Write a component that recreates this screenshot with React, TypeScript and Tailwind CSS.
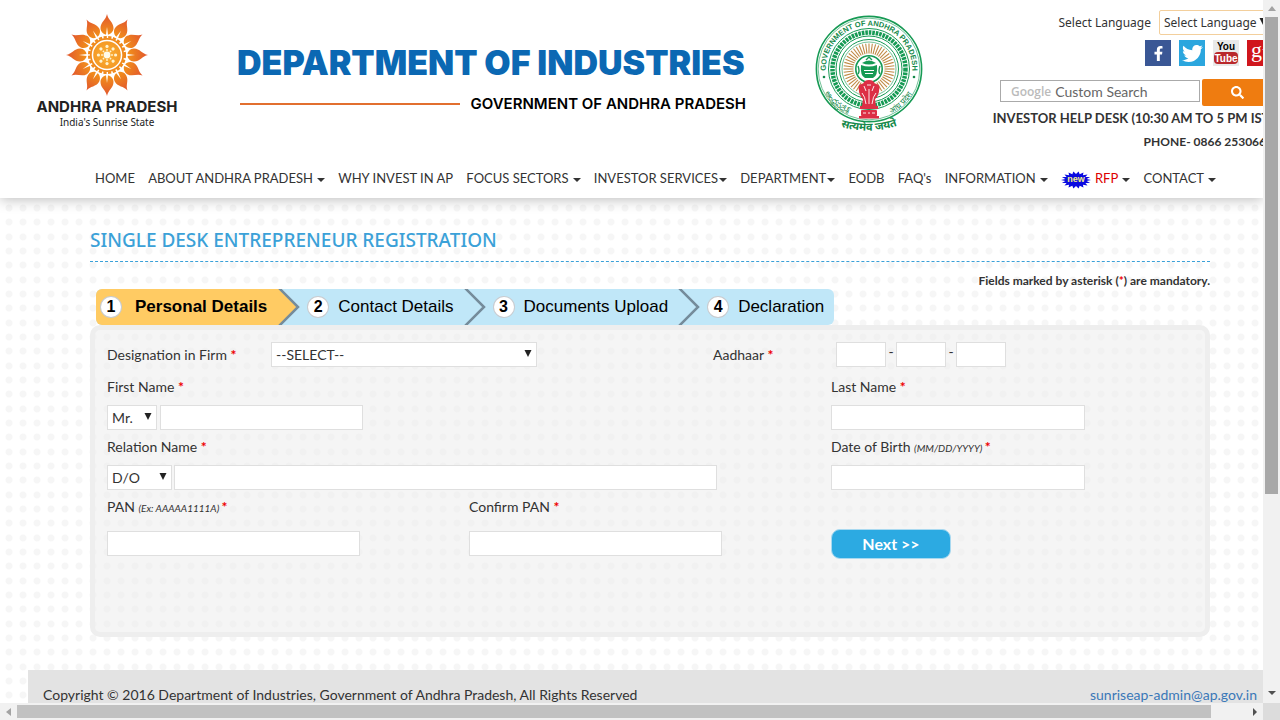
import React from "react";
import { FaFacebookF, FaSearch, FaTwitter } from "react-icons/fa";

const fieldClass = "h-[25px] border border-[#dfdfdf] bg-white px-1 text-sm text-[#333] outline-none";

function SunLogo() {
  const petals = Array.from({ length: 12 }, (_, i) => i * 30);
  const dots = Array.from({ length: 8 }, (_, i) => i * 45);
  return (
    <svg viewBox="-42 -42 84 84" className="h-[84px] w-[84px]" aria-hidden="true">
      <defs>
        <radialGradient id="sun" gradientUnits="userSpaceOnUse" cx="0" cy="0" r="42">
          <stop offset="0" stopColor="#fbb034" />
          <stop offset="0.55" stopColor="#f08a1c" />
          <stop offset="1" stopColor="#e0522f" />
        </radialGradient>
      </defs>
      {petals.map((a) => (
        <g key={a} transform={`rotate(${a})`}>
          <path d="M0-41C1-35 6.500-33 6.500-27C6.500-23 3-20.500 1-20.500L0-28L-1-20.500C-3-20.500-6.500-23-6.500-27C-6.500-33-1-35 0-41Z" fill="url(#sun)" />
        </g>
      ))}
      <circle r="17.8" fill="none" stroke="#f08a1c" strokeWidth="2.5" strokeDasharray="3.2 1.5" />
      <circle r="16.2" fill="none" stroke="#f08a1c" strokeWidth="1.8" />
      <circle r="13.8" fill="url(#sun)" />
      {dots.map((a) => (
        <g key={a} transform={`rotate(${a})`}>
          <circle cy="-8.6" r="1.6" fill="#fff3d0" />
          <circle cy="-5" r="0.9" fill="#fff3d0" />
        </g>
      ))}
      <circle r="3.4" fill="#fffbe8" />
    </svg>
  );
}

function StateEmblem() {
  const rays = Array.from({ length: 48 }, (_, i) => i * 7.5);
  return (
    <svg viewBox="-56 -56 112 122" className="h-[122px] w-[112px]" role="img" aria-label="Government of Andhra Pradesh">
      <defs>
        <path id="ringTop" d="M-42 10A43.2 43.2 0 1 1 42 10" />
        <path id="ringLeft" d="M-48 14A49.6 49.6 0 0 0-11 48.5" />
        <path id="ringRight" d="M11 48.5A49.6 49.6 0 0 0 48 14" />
        <path id="motto" d="M-30 57Q0 67 30 56" />
      </defs>
      <g fill="none" stroke="#169a54">
        <circle r="52.6" fill="#fff" strokeWidth="1.6" />
        <circle r="50.8" strokeWidth="0.6" />
        <circle r="40.5" strokeWidth="1" />
        <circle r="36.5" strokeWidth="4.5" strokeDasharray="2.6 0.9" />
        <circle r="33" strokeWidth="1" />
        <circle r="29.5" strokeWidth="1" />
        <circle r="27" strokeWidth="0.6" />
      </g>
      {rays.map((a) => (
        <path key={a} d="M0-25.5V-15.5" stroke="#c08a45" strokeWidth="1.1" transform={`rotate(${a})`} />
      ))}
      <circle r="13.2" fill="#fff" stroke="#169a54" strokeWidth="1.6" />
      <path d="M-8-4Q-9 7-4 9H4Q9 7 8-4Q0-1-8-4ZM-7-6Q0-11 7-6Q0-3-7-6Z" fill="#169a54" />
      <path d="M-11-3Q-9 2-11 5M11-3Q9 2 11 5M-5 2H5M-4 5.500H4M-3-9L0-12L3-9" fill="none" stroke="#169a54" strokeWidth="1.4" />
      <path d="M-5 1.500H5M-4 4.500H4" stroke="#fff" strokeWidth="1" />
      <g fill="#dc2f45">
        <path d="M-10 22Q-12 14-6 15Q-5 11 0 11Q5 11 6 15Q12 14 10 22Q9 28 6 30L7 37H-7L-6 30Q-9 28-10 22Z" />
        <rect x="-9" y="37" width="18" height="3" />
        <rect x="-8" y="41" width="16" height="6" rx="1" />
        <rect x="-10" y="47" width="20" height="2.500" />
      </g>
      <path d="M-5 17L-3 22M5 17L3 22M-2 16H2M-7 24Q-4 27-3 35M7 24Q4 27 3 35M0 20V35M-6 44H-3M-1 44H1M3 44H6" fill="none" stroke="#fff" strokeWidth="0.9" />
      <g fill="#15894a" fontFamily="Noto Sans, sans-serif">
        <text fontFamily="Liberation Sans, sans-serif" fontSize="7.500" fontWeight="700">
          <textPath href="#ringTop" startOffset="50%" textAnchor="middle">GOVERNMENT OF ANDHRA PRADESH</textPath>
        </text>
        <text fontSize="8">
          <textPath href="#ringLeft" startOffset="50%" textAnchor="middle">ఆంధ్రప్రదేశ్</textPath>
        </text>
        <text fontSize="8">
          <textPath href="#ringRight" startOffset="50%" textAnchor="middle">आंध्र प्रदेश</textPath>
        </text>
        <text fontSize="11" fontWeight="700">
          <textPath href="#motto" startOffset="50%" textAnchor="middle">सत्यमेव जयते</textPath>
        </text>
        <circle cx="-45" cy="8" r="1.300" />
        <circle cx="45" cy="8" r="1.300" />
      </g>
    </svg>
  );
}

function NewBadge() {
  const points = Array.from({ length: 36 }, (_, i) => {
    const a = (i * Math.PI) / 18;
    const k = i % 2 ? 0.72 : 1;
    return `${(15 * k * Math.cos(a)).toFixed(1)},${(8.5 * k * Math.sin(a)).toFixed(1)}`;
  }).join(" ");
  return (
    <svg viewBox="-15 -9 30 18" className="mt-1 h-[18px] w-[30px]">
      <polygon points={points} fill="#0a0ae0" />
      <text y="2" textAnchor="middle" fontSize="9" fontWeight="700" fontFamily="Liberation Sans, sans-serif" fill="#f5f08a">
        new
      </text>
    </svg>
  );
}

function Select({ id, label, value, className }: { id: string; label: string; value: string; className: string }) {
  return (
    <div className={`relative shrink-0 ${className}`}>
      <select id={id} aria-label={label} className={`${fieldClass} block w-full appearance-none`}>
        <option>{value}</option>
      </select>
      <svg viewBox="0 0 8 7" className="pointer-events-none absolute top-2 right-[5px] h-[7px] w-2">
        <path d="M0.500 0H7.500L4 7Z" fill="#222" />
      </svg>
    </div>
  );
}

function Label({ htmlFor, hint, children }: { htmlFor: string; hint?: string; children: React.ReactNode }) {
  return (
    <label htmlFor={htmlFor} className="block h-5 text-sm leading-5 whitespace-nowrap">
      {children} {hint && <i className="text-[10px]">{hint} </i>}
      <span className="font-bold text-[#e00]">*</span>
    </label>
  );
}

const menu = [
  { name: "HOME" },
  { name: "ABOUT ANDHRA PRADESH", caret: true },
  { name: "WHY INVEST IN AP" },
  { name: "FOCUS SECTORS", caret: true },
  { name: "INVESTOR SERVICES", caret: true, tight: true },
  { name: "DEPARTMENT", caret: true, tight: true },
  { name: "EODB" },
  { name: "FAQ's" },
  { name: "INFORMATION", caret: true },
  { name: "RFP", caret: true, isNew: true },
  { name: "CONTACT", caret: true },
];

const steps = ["Personal Details", "Contact Details", "Documents Upload", "Declaration"];

function Header() {
  return (
    <header className="relative flex h-[198px] shrink-0 flex-col justify-between bg-white shadow-[0_2px_12px_rgba(0,0,0,0.25)]">
      <div className="flex items-start">
        <div className="ml-[30px] flex w-[154px] shrink-0 flex-col items-center pt-[13px]">
          <SunLogo />
          <div className="font-[Inter,sans-serif] text-[15px] leading-5 font-bold whitespace-nowrap text-[#222]">ANDHRA PRADESH</div>
          <div className="font-['Noto_Sans',sans-serif] text-[10px] leading-[10px] text-[#222]">India's Sunrise State</div>
        </div>
        <div className="ml-[53px] w-[512px] shrink-0 pt-10">
          <h1 className="font-[Inter,sans-serif] text-[34px] leading-[46px] font-black whitespace-nowrap text-[#0b68b3]">DEPARTMENT OF INDUSTRIES</h1>
          <div className="mt-2 flex items-center gap-[10px] px-[3px]">
            <div className="h-[2px] flex-1 bg-[#e26f2f]" />
            <div className="font-[Inter,sans-serif] text-[15px] leading-5 font-semibold whitespace-nowrap text-black">GOVERNMENT OF ANDHRA PRADESH</div>
          </div>
        </div>
        <div className="ml-16 shrink-0 pt-[13px]">
          <StateEmblem />
        </div>
        <div className="mr-[-10px] ml-auto flex w-[274px] shrink-0 flex-col items-end pt-[10px]">
          <div className="flex items-center gap-2 font-['Noto_Sans',sans-serif] text-xs">
            <label htmlFor="language">Select Language</label>
            <div className="relative w-[114px]">
              <select id="language" className="h-[25px] w-full appearance-none rounded-xs border border-[#f3cf9c] bg-white px-1 text-[#333]">
                <option>Select Language</option>
              </select>
              <svg viewBox="0 0 8 7" className="pointer-events-none absolute top-2 right-[6px] h-[7px] w-2">
                <path d="M0.500 0H7.500L4 7Z" fill="#222" />
              </svg>
            </div>
          </div>
          <div className="mt-[5px] flex gap-2">
            <a href="#" aria-label="Facebook" className="flex size-[26px] items-center justify-center bg-[#3a5795] text-white">
              <FaFacebookF size={15} />
            </a>
            <a href="#" aria-label="Twitter" className="flex size-[26px] items-center justify-center bg-[#2ba6de] text-white">
              <FaTwitter size={21} />
            </a>
            <a href="#" aria-label="YouTube" className="size-[26px] bg-[#e9e9e9]">
              <svg viewBox="0 0 26 26" className="size-[26px]" fontFamily="Liberation Sans Narrow, Liberation Sans, sans-serif" fontWeight="700">
                <rect x="1" y="12" width="24" height="12" rx="4" fill="#b9282c" />
                <text x="13" y="10" fontSize="10" textAnchor="middle" fill="#000">You</text>
                <text x="13" y="22" fontSize="10" textAnchor="middle" fill="#fff">Tube</text>
              </svg>
            </a>
            <a href="#" aria-label="Google Plus" className="size-[26px] bg-[#d0161d]">
              <svg viewBox="0 0 26 26" className="size-[26px]" fontFamily="Liberation Serif, serif" fill="#fff">
                <text x="4" y="17" fontSize="22">g</text>
                <text x="15" y="14" fontSize="14">+</text>
              </svg>
            </a>
          </div>
          <form className="mt-[13px] flex w-full gap-[2px] pl-px">
            <div className="mt-px flex h-[22px] w-[200px] items-center gap-1 border border-[#aaa] bg-white pt-[2px] pl-[10px]">
              <span className="font-['Open_Sans',sans-serif] text-xs font-semibold text-[#bbb]">Google</span>
              <input aria-label="Custom Search" placeholder="Custom Search" className="w-full min-w-0 text-sm outline-none placeholder:text-[#666]" />
            </div>
            <button type="button" aria-label="Search" className="flex h-[27px] flex-1 items-center justify-center rounded-xs bg-[#ef7c10] text-white">
              <FaSearch size={13} />
            </button>
          </form>
          <div className="text-[13px] leading-6 font-bold whitespace-nowrap">INVESTOR HELP DESK (10:30 AM TO 5 PM IST)</div>
          <div className="text-xs leading-6 font-bold whitespace-nowrap">PHONE- 0866 2530663</div>
        </div>
      </div>
      <nav className="mr-[47px] mb-[9px] ml-[95px] flex justify-between text-[13px] leading-5 whitespace-nowrap">
        {menu.map((item) => (
          <a key={item.name} href="#" className={`flex items-center ${item.tight ? "gap-px" : "gap-1"} ${item.isNew ? "text-[#d00]" : ""}`}>
            {item.isNew && <NewBadge />}
            {item.name}
            {item.caret && <span className="mt-1 border-x-4 border-t-4 border-x-transparent border-t-[#333]" />}
          </a>
        ))}
      </nav>
    </header>
  );
}

function Steps() {
  return (
    <ol className="ml-[6px] flex h-9 w-fit overflow-hidden rounded-md bg-[#c0e7f8] font-['Liberation_Sans',Arial,sans-serif] text-[17px] text-black">
      {steps.map((step, i) => (
        <li key={step} className="flex whitespace-nowrap">
          <div className={`flex items-center ${i === 0 ? "gap-[14px] bg-[#ffcb63] pr-[11px] pl-[5px] font-bold" : "gap-[10px] pr-[10px] pl-2"}`}>
            <span className="flex size-5 items-center justify-center rounded-full bg-white text-base font-bold ring-1 ring-[#c9ccd0]">{i + 1}</span>
            {step}
          </div>
          {i < steps.length - 1 && (
            <svg viewBox="0 0 22 36" className="h-9 w-[22px]">
              <path d="M0 0H2L20 18L2 36H0Z" fill={i === 0 ? "#ffcb63" : "#c0e7f8"} />
              <path d="M1-1L20 18L1 37" fill="none" stroke="#758c9b" strokeWidth="2.500" />
            </svg>
          )}
        </li>
      ))}
    </ol>
  );
}

function RegistrationForm() {
  return (
    <form className="rounded-[10px] border-5 border-[#eee] bg-[#ebebeb]/50 px-3 pt-3 pb-[73px]">
      <div className="grid grid-cols-[164px_442px_123px_1fr] items-center text-sm">
        <Label htmlFor="designation">Designation in Firm</Label>
        <Select id="designation" label="Designation in Firm" value="--SELECT--" className="w-[266px]" />
        <Label htmlFor="aadhaar">Aadhaar</Label>
        <div className="flex">
          <input id="aadhaar" className={`${fieldClass} w-[50px]`} />
          <span className="w-[10px] text-center">-</span>
          <input aria-label="Aadhaar, middle part" className={`${fieldClass} w-[50px]`} />
          <span className="w-[10px] text-center">-</span>
          <input aria-label="Aadhaar, last part" className={`${fieldClass} w-[50px]`} />
        </div>
      </div>
      <div className="mt-[10px] grid grid-cols-3 gap-y-[7px]">
        <div className="col-span-2 space-y-2">
          <Label htmlFor="firstName">First Name</Label>
          <div className="flex gap-[3px]">
            <Select id="title" label="Title" value="Mr." className="w-[50px]" />
            <input id="firstName" className={`${fieldClass} w-[203px]`} />
          </div>
        </div>
        <div className="space-y-2">
          <Label htmlFor="lastName">Last Name</Label>
          <input id="lastName" className={`${fieldClass} block w-[254px]`} />
        </div>
        <div className="col-span-2 space-y-2">
          <Label htmlFor="relationName">Relation Name</Label>
          <div className="flex gap-[2px]">
            <Select id="relation" label="Relation" value="D/O" className="w-[65px]" />
            <input id="relationName" className={`${fieldClass} w-[543px]`} />
          </div>
        </div>
        <div className="space-y-2">
          <Label htmlFor="dob" hint="(MM/DD/YYYY)">Date of Birth</Label>
          <input id="dob" className={`${fieldClass} block w-[254px]`} />
        </div>
        <div className="space-y-[14px]">
          <Label htmlFor="pan" hint="(Ex: AAAAA1111A)">PAN</Label>
          <input id="pan" className={`${fieldClass} block w-[253px]`} />
        </div>
        <div className="space-y-[14px]">
          <Label htmlFor="confirmPan">Confirm PAN</Label>
          <input id="confirmPan" className={`${fieldClass} block w-[253px]`} />
        </div>
        <div className="pt-8">
          <button type="button" className="block h-[30px] w-[120px] rounded-[9px] border border-[#a9d9f0] bg-[#2caae2] text-base font-bold text-white">
            Next &gt;&gt;
          </button>
        </div>
      </div>
    </form>
  );
}

export default function App() {
  return (
    <div className="flex h-screen flex-col overflow-hidden bg-white font-[Lato,sans-serif] text-[#333]">
      <div className="flex min-h-0 flex-1">
        <div className="flex min-w-0 flex-1 flex-col overflow-hidden">
          <Header />
          <div className="flex flex-1 flex-col bg-[radial-gradient(circle_at_9px_10px,#f6f6f6_3px,transparent_4px),radial-gradient(circle_at_9px_24px,#f6f6f6_3px,transparent_4px),radial-gradient(circle_at_9px_39px,#f6f6f6_3px,transparent_4px)] bg-size-[14px_43px]">
            <main className="mr-[53px] ml-[90px] pt-7">
              <h2 className="border-b border-dashed border-[#3ba1d8] pb-[7px] font-['Noto_Sans',sans-serif] text-[19px] leading-7 font-medium text-[#3ba1d8]">
                SINGLE DESK ENTREPRENEUR REGISTRATION
              </h2>
              <p className="mt-[9px] mb-[-2px] text-right text-xs leading-5 font-bold">
                Fields marked by asterisk (<span className="text-[#e00]">*</span>) are mandatory.
              </p>
              <Steps />
              <RegistrationForm />
            </main>
            <footer className="mt-[33px] ml-7 flex flex-1 justify-between bg-[#e3e3e3] px-[15px] pt-[15px] pr-[6px] text-sm leading-5">
              <span>Copyright © 2016 Department of Industries, Government of Andhra Pradesh, All Rights Reserved</span>
              <a href="#" className="text-[#3a78b8]">sunriseap-admin@ap.gov.in</a>
            </footer>
          </div>
        </div>
        <div className="flex w-[17px] shrink-0 flex-col items-center bg-[#f1f1f1]">
          <span className="my-[6px] border-x-4 border-b-5 border-x-transparent border-b-[#a3a3a3]" />
          <div className="h-[477px] w-[13px] bg-[#a8a8a8]" />
          <span className="mt-auto mb-2 border-x-4 border-t-4 border-x-transparent border-t-[#505050]" />
        </div>
      </div>
      <div className="flex h-[17px] shrink-0 items-center bg-[#f1f1f1]">
        <span className="mx-[6px] border-y-4 border-r-5 border-y-transparent border-r-[#a3a3a3]" />
        <div className="mr-[42px] h-[13px] flex-1 bg-[#c1c1c1]" />
        <span className="mr-[6px] border-y-4 border-l-4 border-y-transparent border-l-[#505050]" />
        <div className="size-[17px] bg-[#dcdcdc]" />
      </div>
    </div>
  );
}
